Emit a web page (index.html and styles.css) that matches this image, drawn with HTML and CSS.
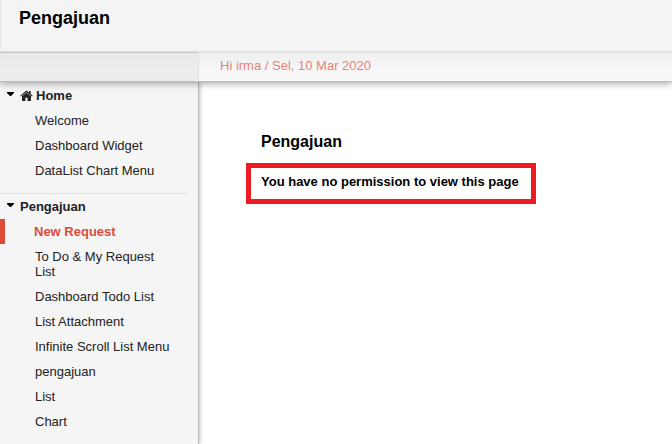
FILE: index.html
```html
<!DOCTYPE html>
<html lang="id">
<head>
<meta charset="utf-8">
<title>Pengajuan</title>
<link rel="stylesheet" href="styles.css">
</head>
<body>
<header class="header"><h1>Pengajuan</h1></header>
<div class="userbar"><div class="userbar-side"></div><span class="greeting">Hi irma / Sel, 10 Mar 2020</span></div>
<div class="body">
  <nav class="sidebar">
    <section class="category">
      <h2><svg class="caret" viewBox="0 0 7 4"><path d="M0 0h7v1L4 4H3L0 1z"/></svg><svg class="home" viewBox="0 0 13 11"><path d="M6.5 2.6 11 6.3V10.2Q11 11 10.3 11H7.6V7.7H5.4V11H2.7Q2 11 2 10.2V6.3zM.3 5.7 5.8 1Q6.5.5 7.2 1L9 2.5V1h1.6v2.8l2.1 1.9-.7.8L6.5 1.9 1 6.5z"/></svg>Home</h2>
      <ul><li>Welcome</li><li>Dashboard Widget</li><li>DataList Chart Menu</li></ul>
    </section>
    <section class="category">
      <h2><svg class="caret" viewBox="0 0 7 4"><path d="M0 0h7v1L4 4H3L0 1z"/></svg>Pengajuan</h2>
      <ul><li class="current">New Request</li><li>To Do &amp; My Request List</li><li>Dashboard Todo List</li><li>List Attachment</li><li>Infinite Scroll List Menu</li><li>pengajuan</li><li>List</li><li>Chart</li></ul>
    </section>
  </nav>
  <main class="content">
    <h3>Pengajuan</h3>
    <p class="notice">You have no permission to view this page</p>
  </main>
</div>
</body>
</html>
```
FILE: styles.css
```css
* { box-sizing: border-box; }
body {
  margin: 0;
  height: 444px;
  overflow: hidden;
  display: flex;
  flex-direction: column;
  background: #fff;
  color: #222;
  font: 13px/15px "Liberation Sans", Arial, sans-serif;
}
h1, h2, h3, p, ul { margin: 0; padding: 0; }
.header {
  position: relative;
  z-index: 2;
  height: 52px;
  flex: none;
  padding: 8px 18px;
  background: #f4f4f4;
  border-left: 1px solid #e5e5e5;
  border-bottom: 1px solid #e2e2e2;
}
h1 { font-size: 18px; line-height: 20px; color: #000; }
.userbar {
  height: 30px;
  flex: none;
  display: flex;
  position: relative;
  z-index: 1;
  background: linear-gradient(#e2e2e2 1px, #efefef 1px, #f8f8f8 70%);
  border-bottom: 1px solid #bbb;
  box-shadow: 0 1px 8px rgba(0, 0, 0, .4);
}
.userbar-side {
  width: 199px;
  background: linear-gradient(#c4c4c4 1px, #e9e9e9 1px, #ededed 60%);
  border-right: 1px solid #e2e2e2;
}
.greeting { padding: 6px 0 0 21px; color: #e88378; }
.body { flex: 1; min-height: 0; display: flex; }
.sidebar {
  width: 199px;
  flex: none;
  background: #f5f5f5;
  border-right: 1px solid #bbb;
  box-shadow: 1px 0 4px rgba(0, 0, 0, .25);
}
.category { padding-top: 6px; }
.category + .category { margin-top: 10px; width: 188px; border-top: 1px solid #e0e0e0; padding-top: 5px; }
h2 { display: flex; font-size: 13px; line-height: 15px; height: 20px; padding-left: 7px; }
.caret { width: 7px; height: 4px; margin: 4px 6px 0 0; fill: #000; }
.home { width: 13px; height: 11px; margin: 2px 3px 0 0; fill: #222; }
ul { list-style: none; }
li { padding: 5px 15px 5px 35px; }
li.current { font-weight: bold; color: #dd4b39; border-left: 5px solid #dd4b39; padding-left: 29px; }
.content { padding: 51px 0 0 47px; color: #000; }
h3 { font-size: 16px; line-height: 18px; padding-left: 15px; }
.notice { width: 290px; height: 41px; margin-top: 12px; padding: 6px 0 0 10px; border: 5px solid #ed1c24; font-weight: bold; }
```
